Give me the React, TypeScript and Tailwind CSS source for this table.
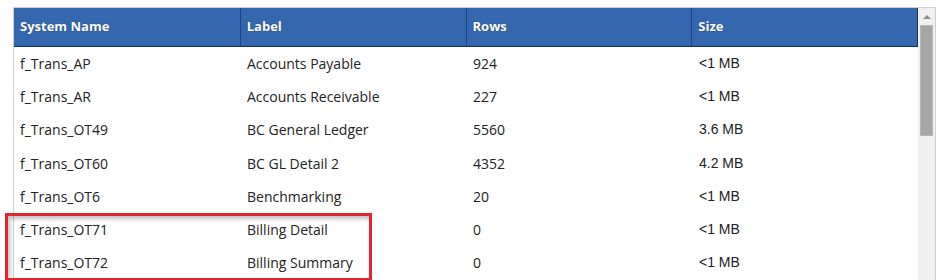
const rows = [
  { name: 'f_Trans_AP', label: 'Accounts Payable', rows: '924', size: '<1 MB' },
  { name: 'f_Trans_AR', label: 'Accounts Receivable', rows: '227', size: '<1 MB' },
  { name: 'f_Trans_OT49', label: 'BC General Ledger', rows: '5560', size: '3.6 MB' },
  { name: 'f_Trans_OT60', label: 'BC GL Detail 2', rows: '4352', size: '4.2 MB' },
  { name: 'f_Trans_OT6', label: 'Benchmarking', rows: '20', size: '<1 MB' },
  { name: 'f_Trans_OT71', label: 'Billing Detail', rows: '0', size: '<1 MB' },
  { name: 'f_Trans_OT72', label: 'Billing Summary', rows: '0', size: '<1 MB' },
]

const headers = ['System Name', 'Label', 'Rows', 'Size']

export default function App() {
  return (
    <div className="relative w-[936px] h-[280px] overflow-hidden bg-white pl-[13px] pt-[7px] font-['Open_Sans',sans-serif]">
      <div className="flex h-[300px] border-l border-t border-r border-[#cfcfcf]">
        {/* Table */}
        <div className="flex-1">
          <div className="grid grid-cols-4 h-[39px] bg-[#3567ae] border-b border-r border-[#0f2f6e]">
            {headers.map((h, i) => (
              <div
                key={h}
                className={`flex items-center pl-[6px] text-[13px] font-bold text-white [text-shadow:0_0_1px_rgba(0,0,0,0.5)] ${i > 0 ? 'border-l border-[#1d4588]' : ''}`}
              >
                {h}
              </div>
            ))}
          </div>
          {rows.map((r) => (
            <div key={r.name} className="grid grid-cols-4 h-[33.2px] text-[14px] text-[#222]">
              <div className="flex items-center pl-[6px]">{r.name}</div>
              <div className="flex items-center pl-[7px]">{r.label}</div>
              <div className="flex items-center pl-[7px]">{r.rows}</div>
              <div className="flex items-center pl-[7px] font-['Liberation_Sans',Arial,sans-serif]">{r.size}</div>
            </div>
          ))}
        </div>

        {/* Scrollbar */}
        <div className="w-[17px] bg-[#f0f0f0] flex flex-col items-center">
          <div className="h-[17px] w-full flex items-center justify-center">
            <div className="w-0 h-0 border-l-[4px] border-r-[4px] border-b-[4px] border-l-transparent border-r-transparent border-b-[#8c8c8c]" />
          </div>
          <div className="w-[13px] h-[111px] bg-[#a6a6a6] border border-[#b8b8b8]" />
        </div>
      </div>

      {/* Highlight annotation */}
      <div className="absolute left-[5px] top-[213px] w-[367px] h-[68px] border-[3px] border-[#e1262d] shadow-[inset_2px_3px_4px_rgba(0,0,0,0.25)]" />
    </div>
  )
}
